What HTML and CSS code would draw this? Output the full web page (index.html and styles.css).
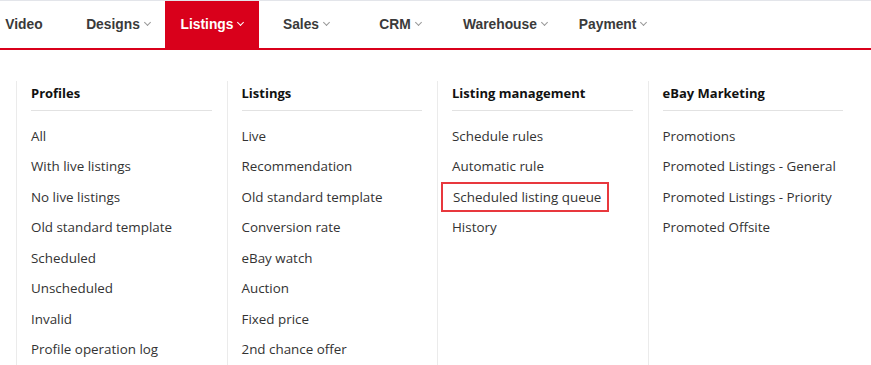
FILE: index.html
```html
<!DOCTYPE html>
<html lang="en">
<head>
    <meta charset="UTF-8">
    <meta name="viewport" content="width=device-width, initial-scale=1.0">
    <title>Listings menu</title>
    <link rel="stylesheet" href="styles.css">
</head>
<body>
    <div class="topnav">
        <div class="nav-items">
            <div class="nav-item">Video</div>
            <div class="nav-item">Designs <span class="caret"></span></div>
            <div class="nav-item active">Listings <span class="caret"></span></div>
            <div class="nav-item">Sales <span class="caret"></span></div>
            <div class="nav-item">CRM <span class="caret"></span></div>
            <div class="nav-item wide">Warehouse <span class="caret"></span></div>
            <div class="nav-item wide">Payment <span class="caret"></span></div>
        </div>
    </div>

    <div class="dropdown">
        <div class="col">
            <h4>Profiles</h4>
            <ul>
                <li>All</li>
                <li>With live listings</li>
                <li>No live listings</li>
                <li>Old standard template</li>
                <li>Scheduled</li>
                <li>Unscheduled</li>
                <li>Invalid</li>
                <li>Profile operation log</li>
            </ul>
        </div>
        <div class="col">
            <h4>Listings</h4>
            <ul>
                <li>Live</li>
                <li>Recommendation</li>
                <li>Old standard template</li>
                <li>Conversion rate</li>
                <li>eBay watch</li>
                <li>Auction</li>
                <li>Fixed price</li>
                <li>2nd chance offer</li>
            </ul>
        </div>
        <div class="col">
            <h4>Listing management</h4>
            <ul>
                <li>Schedule rules</li>
                <li>Automatic rule</li>
                <li><span class="marked">Scheduled listing queue</span></li>
                <li>History</li>
            </ul>
        </div>
        <div class="col">
            <h4>eBay Marketing</h4>
            <ul>
                <li>Promotions</li>
                <li>Promoted Listings - General</li>
                <li>Promoted Listings - Priority</li>
                <li>Promoted Offsite</li>
            </ul>
        </div>
    </div>
</body>
</html>
```

FILE: styles.css
```css
* {
    box-sizing: border-box;
}
body {
    margin: 0;
    font-family: "Open Sans", "Noto Sans", sans-serif;
    background: #fff;
    color: #333;
    overflow: hidden;
}
.topnav {
    border-top: 1px solid #e3e5ea;
    border-bottom: 2px solid #d9001b;
    height: 50px;
    overflow: hidden;
}
.nav-items {
    display: flex;
    margin-left: -23px;
    height: 47px;
}
.nav-item {
    display: flex;
    align-items: center;
    justify-content: center;
    min-width: 94px;
    padding: 0 14px;
    font-family: "Liberation Sans", Arial, sans-serif;
    font-size: 13.8px;
    font-weight: bold;
    color: #3a3a3a;
    white-space: nowrap;
}
.nav-item.wide {
    padding: 0 16px;
}
.nav-item.active {
    background: #d9001b;
    color: #fff;
}
.caret {
    display: inline-block;
    width: 5px;
    height: 5px;
    margin-left: 5px;
    margin-top: -4px;
    border-right: 1px solid #999;
    border-bottom: 1px solid #999;
    transform: rotate(45deg);
}
.active .caret {
    border-color: #fff;
}
.dropdown {
    display: flex;
    padding: 31px 0 0 16px;
}
.col {
    width: 210.5px;
    border-left: 1px solid #ebebeb;
    padding: 0 15px 0 14px;
    height: 300px;
}
.col h4 {
    margin: 0;
    padding: 3px 0 8px;
    line-height: 18px;
    font-size: 13px;
    font-weight: bold;
    color: #111;
    border-bottom: 1px solid #e2e2e2;
}
.col ul {
    list-style: none;
    margin: 10px 0 0;
    padding: 0;
}
.col li {
    height: 30.45px;
    line-height: 30.45px;
    font-size: 13.4px;
    color: #333;
    white-space: nowrap;
}
.marked {
    display: inline-block;
    line-height: 26px;
    padding: 0 6px 0 10px;
    margin-left: -11px;
    border: 2px solid #e8383d;
}
```
